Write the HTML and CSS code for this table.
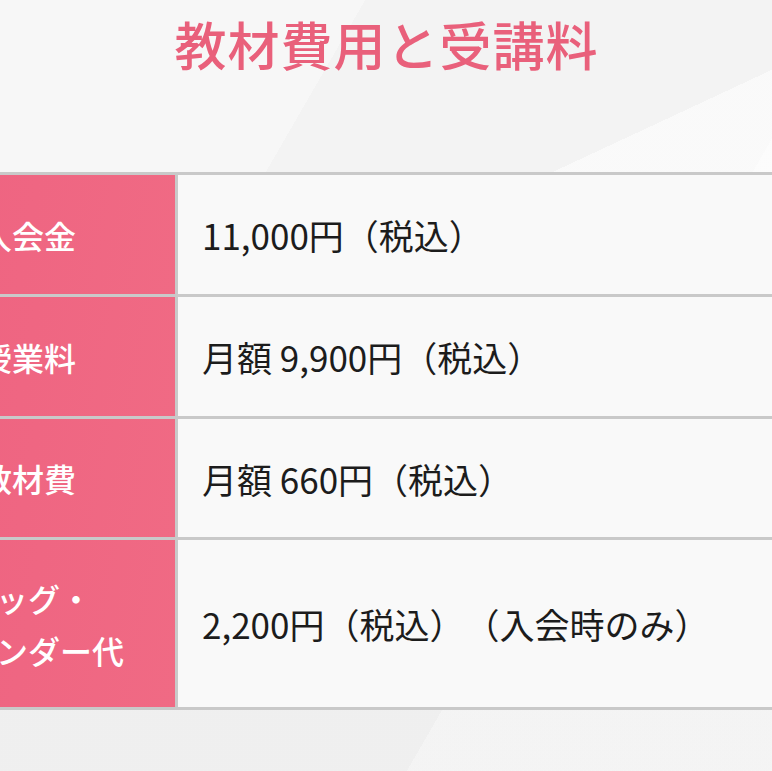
FILE: index.html
```html
<!DOCTYPE html>
<html lang="ja">
<head>
<meta charset="utf-8">
<title>教材費用と受講料</title>
<link rel="stylesheet" href="styles.css">
</head>
<body>
<main class="page">
  <h1 class="title">教材費用と受講料</h1>
  <div class="fee-table">
    <div class="fee-head">入会金</div>
    <div class="fee-value">11,000円（税込）</div>
    <div class="fee-head">授業料</div>
    <div class="fee-value">月額 9,900円（税込）</div>
    <div class="fee-head">教材費</div>
    <div class="fee-value">月額 660円（税込）</div>
    <div class="fee-head fee-head-tall">バッグ・<br>バインダー代</div>
    <div class="fee-value">2,200円（税込）（入会時のみ）</div>
  </div>
</main>
</body>
</html>
```
FILE: styles.css
```css
html, body {
  margin: 0;
  padding: 0;
  overflow: hidden;
  height: 100%;
}
body {
  font-family: "Noto Sans CJK JP", "Noto Sans", sans-serif;
  text-spacing-trim: space-all;
  background-color: #f3f3f3;
  background-image:
    linear-gradient(155deg, rgba(255,255,255,0) 0 38%, rgba(255,255,255,0.55) 38% 55%, rgba(255,255,255,0) 55%),
    linear-gradient(30deg, rgba(0,0,0,0.015) 0 45%, rgba(255,255,255,0) 45%),
    linear-gradient(120deg, rgba(255,255,255,0.35) 0 30%, rgba(255,255,255,0) 30% 70%, rgba(255,255,255,0.4) 70%);
}
.page {
  width: 772px;
}
.title {
  margin: 0 0 102px;
  padding: 17px 0 0 1px;
  font-size: 52px;
  line-height: 53px;
  font-weight: 500;
  letter-spacing: 1px;
  color: #e9607b;
  text-align: center;
}
.fee-table {
  display: grid;
  grid-template-columns: 294px 1fr;
  grid-template-rows: 119px 119px 118px 167px;
  column-gap: 3px;
  row-gap: 3px;
  padding: 3px 0;
  margin-left: -119px;
  width: 1000px;
  background: #c9c9c9;
}
.fee-head {
  background: #ef6580;
  background-image: linear-gradient(100deg, #ee6280 0%, #f06a84 100%);
  color: #ffffff;
  font-size: 32px;
  font-weight: 500;
  line-height: 52px;
  display: flex;
  align-items: center;
  justify-content: center;
  text-align: center;
}
.fee-value {
  background: #f9f9f9;
  color: #1c1c1c;
  font-size: 35px;
  font-weight: 400;
  display: flex;
  align-items: center;
  padding-left: 24px;
}
```
